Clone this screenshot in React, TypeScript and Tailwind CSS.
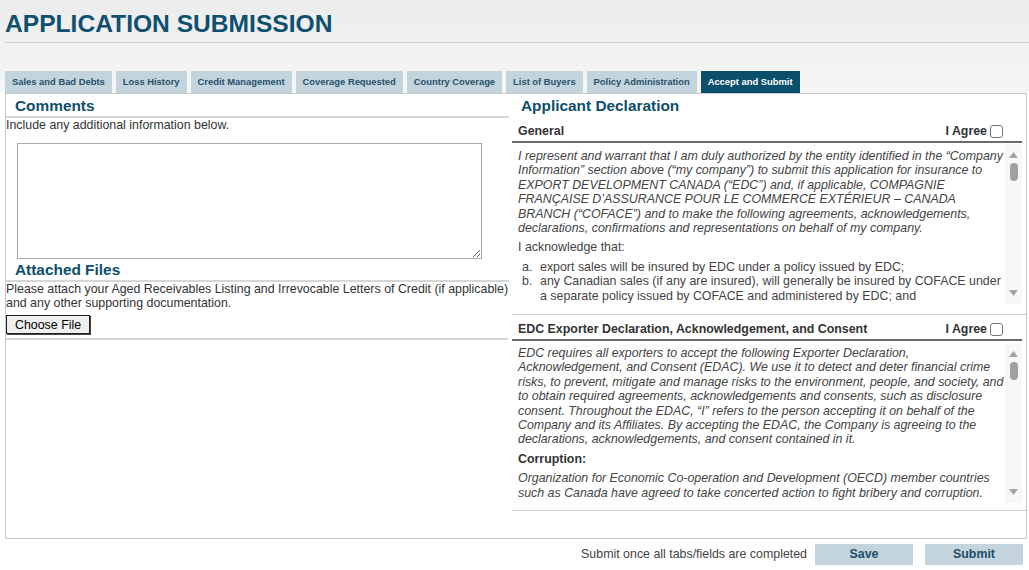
import React from "react";

const tabs = [
  "Sales and Bad Debts",
  "Loss History",
  "Credit Management",
  "Coverage Requested",
  "Country Coverage",
  "List of Buyers",
  "Policy Administration",
  "Accept and Submit",
];

// fake scrollbar, drawn so it looks like the one in the screenshot
const ScrollTrack = () => (
  <div className="w-[17px] shrink-0 bg-[#f7f7f7] flex flex-col items-center justify-between py-[8px]">
    <div className="flex flex-col items-center gap-[5px]">
      <svg width="9" height="6" viewBox="0 0 9 6">
        <path d="M4.5 0 L9 6 L0 6 Z" fill="#a3a3a3" />
      </svg>
      <div className="w-[8px] h-[18px] rounded-[4px] bg-[#a0a0a0]" />
    </div>
    <svg width="9" height="6" viewBox="0 0 9 6">
      <path d="M0 0 L9 0 L4.5 6 Z" fill="#a3a3a3" />
    </svg>
  </div>
);

const SectionHeader = ({ title, className }: { title: string; className: string }) => (
  <div className={`mr-[4px] pl-[6px] pr-[19px] pb-[3px] border-b-2 border-[#6b6b6b] flex items-center justify-between text-[12.4px] leading-[14px] font-bold text-[#333] ${className}`}>
    <span>{title}</span>
    <span className="flex items-center gap-[3px]">
      I Agree
      <span className="w-[13px] h-[13px] rounded-[3px] border border-[#767676] bg-white" />
    </span>
  </div>
);

export default function App() {
  return (
    <div className="w-[1029px] h-[570px] bg-white overflow-hidden font-['Liberation_Sans',Arial,sans-serif] text-[#333]">
      {/* Header band */}
      <div className="bg-gradient-to-b from-[#ececec] to-[#f6f6f6] pt-[9px] pl-[5px]">
        <h1 className="text-[24.6px] leading-[30px] font-bold text-[#10506f] pb-[3px] border-b border-[#cfcfcf]">
          APPLICATION SUBMISSION
        </h1>
        <div className="mt-[28px] flex gap-[4px]">
          {tabs.map((t) => (
            <div
              key={t}
              className={`h-[22px] px-[7px] flex items-center text-[9.4px] font-bold ${
                t === "Accept and Submit" ? "bg-[#0b4f6c] text-white" : "bg-[#c3d4dd] text-[#26526e]"
              }`}
            >
              {t}
            </div>
          ))}
        </div>
      </div>

      {/* Main panel */}
      <div className="ml-[5px] mr-[2px] h-[446px] border border-[#c8c8c8] bg-white flex">
        {/* Left column */}
        <div className="w-[503px] shrink-0">
          <h2 className="h-[24px] pl-[9px] pt-[2px] text-[15.4px] leading-[20px] font-bold text-[#0e4e6c] border-b-2 border-[#d6d6d6]">
            Comments
          </h2>
          <p className="text-[12.4px] leading-[14px] text-[#333]">Include any additional information below.</p>
          <textarea className="mt-[11px] ml-[11px] block w-[465px] h-[116px] border border-[#aaaaaa] resize-y" />
          <h2 className="pl-[9px] h-[23px] text-[15.4px] leading-[22px] font-bold text-[#0e4e6c] border-b-2 border-[#d6d6d6]">
            Attached Files
          </h2>
          <p className="text-[12.4px] leading-[14px] text-[#333]">
            Please attach your Aged Receivables Listing and Irrevocable Letters of Credit (if applicable) and any
            other supporting documentation.
          </p>
          <div className="pt-[5px] pb-[4px] border-b-2 border-[#d6d6d6] mr-[1px]">
            <button className="block h-[19px] px-[8px] text-[12.4px] leading-[14px] text-black bg-[#efefef] border border-[#222] shadow-[1px_1px_0_#444]">
              Choose File
            </button>
          </div>
        </div>

        {/* Right column */}
        <div className="flex-1 pl-[3px]">
          <h2 className="h-[26px] pl-[9px] pt-[2px] text-[15.4px] leading-[20px] font-bold text-[#0e4e6c]">
            Applicant Declaration
          </h2>

          <div className="pb-[10px] border-b border-[#cccccc]">
            <SectionHeader title="General" className="pt-[4px]" />
            <div className="mt-[1px] mr-[4px] h-[160px] flex">
              <div className="flex-1 overflow-hidden pl-[6px] pt-[5px] text-[12.4px] leading-[14.4px] text-[#444]">
                <p className="italic">
                  I represent and warrant that I am duly authorized by the entity identified in the “Company
                  Information” section above (“my company”) to submit this application for insurance to EXPORT
                  DEVELOPMENT CANADA (“EDC”) and, if applicable, COMPAGNIE FRANÇAISE D’ASSURANCE POUR LE COMMERCE
                  EXTÉRIEUR – CANADA BRANCH (“COFACE”) and to make the following agreements, acknowledgements,
                  declarations, confirmations and representations on behalf of my company.
                </p>
                <p className="mt-[5px]">I acknowledge that:</p>
                <ol className="mt-[5px] pl-[4px]">
                  <li className="flex">
                    <span className="w-[18px] shrink-0">a.</span>
                    <span>export sales will be insured by EDC under a policy issued by EDC;</span>
                  </li>
                  <li className="flex">
                    <span className="w-[18px] shrink-0">b.</span>
                    <span>
                      any Canadian sales (if any are insured), will generally be insured by COFACE under a separate
                      policy issued by COFACE and administered by EDC; and
                    </span>
                  </li>
                </ol>
              </div>
              <ScrollTrack />
            </div>
          </div>

          <div className="pb-[7px] border-b border-[#cccccc]">
            <SectionHeader title="EDC Exporter Declaration, Acknowledgement, and Consent" className="pt-[7px]" />
            <div className="mt-[2px] mr-[4px] h-[160px] flex">
              <div className="flex-1 overflow-hidden pl-[6px] pt-[3px] text-[12.4px] leading-[14.4px] text-[#444]">
                <p className="italic">
                  EDC requires all exporters to accept the following Exporter Declaration, Acknowledgement, and
                  Consent (EDAC). We use it to detect and deter financial crime risks, to prevent, mitigate and manage
                  risks to the environment, people, and society, and to obtain required agreements, acknowledgements
                  and consents, such as disclosure consent. Throughout the EDAC, “I” refers to the person accepting it
                  on behalf of the Company and its Affiliates. By accepting the EDAC, the Company is agreeing to the
                  declarations, acknowledgements, and consent contained in it.
                </p>
                <p className="mt-[5px] font-bold text-[#333]">Corruption:</p>
                <p className="mt-[5px] italic">
                  Organization for Economic Co-operation and Development (OECD) member countries such as Canada have
                  agreed to take concerted action to fight bribery and corruption.
                </p>
              </div>
              <ScrollTrack />
            </div>
          </div>
        </div>
      </div>

      {/* Footer */}
      <div className="mt-[5px] pr-[6px] flex items-center justify-end">
        <span className="text-[12.4px] text-[#444] mr-[8px]">Submit once all tabs/fields are completed</span>
        <button className="w-[98px] h-[21px] bg-[#c3d4dd] text-[12.4px] font-bold text-[#1d4d6a]">Save</button>
        <button className="ml-[12px] w-[98px] h-[21px] bg-[#c3d4dd] text-[12.4px] font-bold text-[#1d4d6a]">
          Submit
        </button>
      </div>
    </div>
  );
}
